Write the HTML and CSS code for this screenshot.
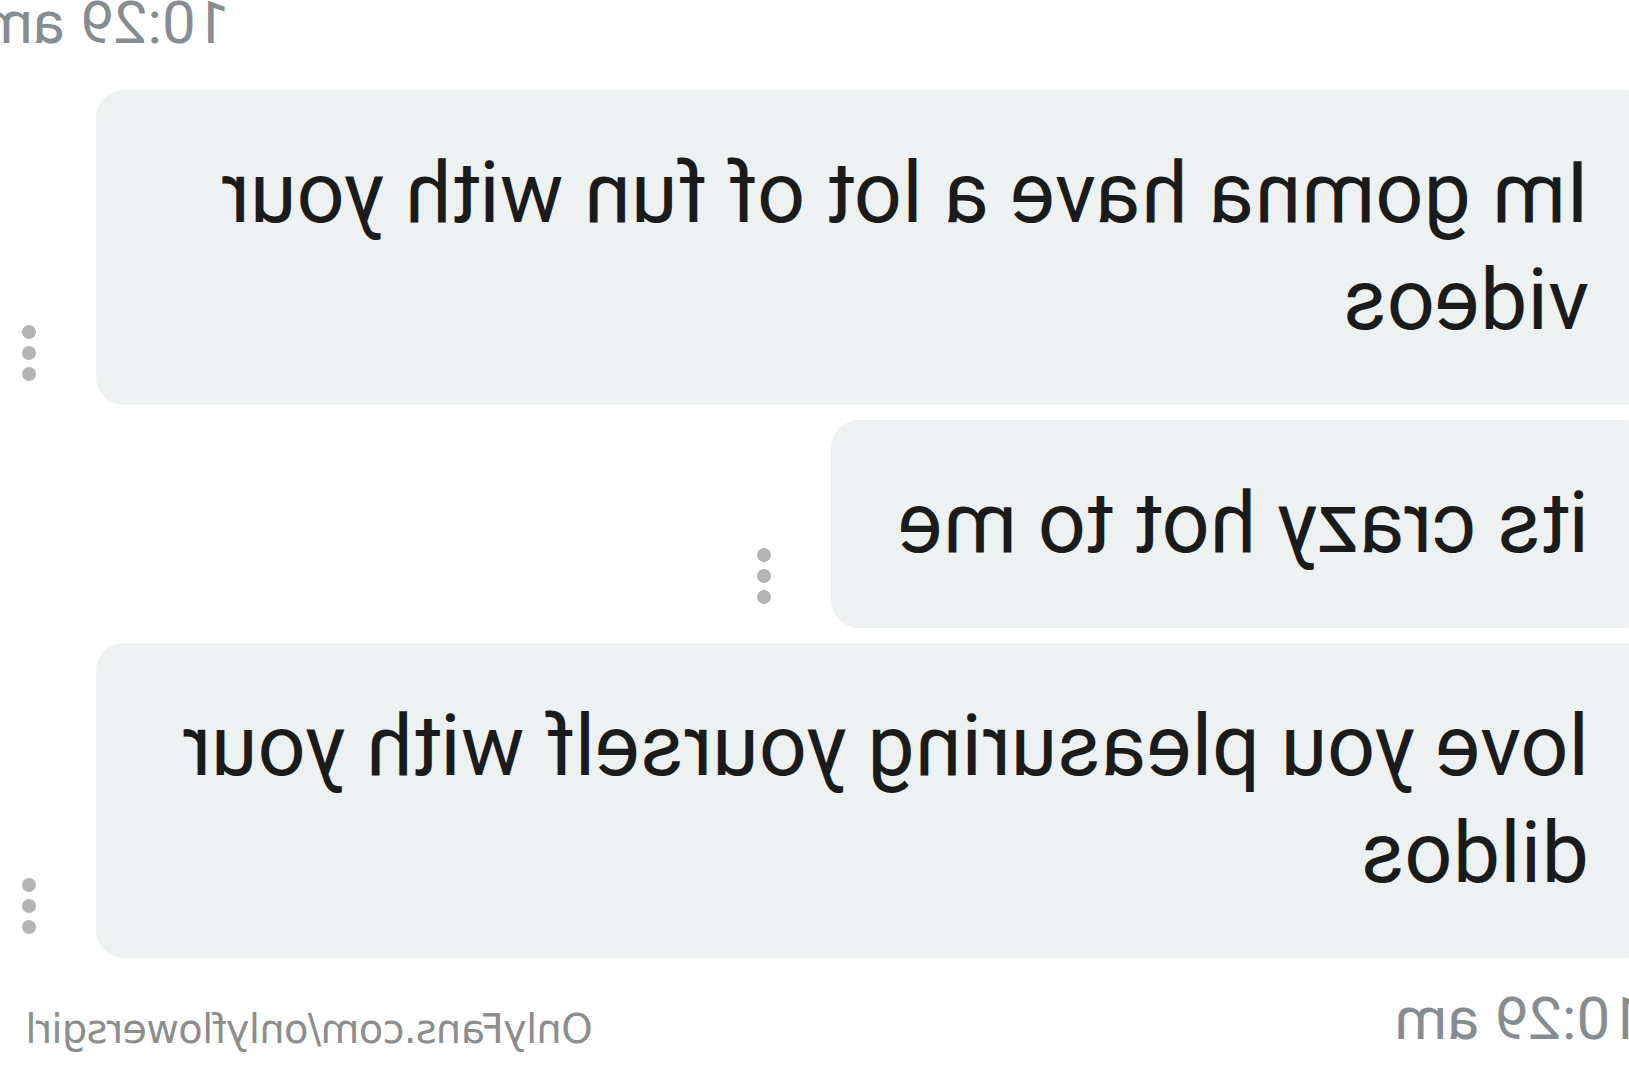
FILE: index.html
```html
<!DOCTYPE html>
<html lang="en">
<head>
  <meta charset="UTF-8">
  <meta name="viewport" content="width=device-width, initial-scale=1.0">
  <title>Messages</title>
  <link rel="stylesheet" href="styles.css">
</head>
<body>
  <!-- the screenshot is a mirror image, so the whole chat is flipped -->
  <div class="chat">
    <div class="time-row top">
      <span class="time">10:29 am</span>
    </div>

    <div class="messages">
      <div class="msg">
        <div class="bubble">Im gomna have a lot of fun with your videos</div>
        <button class="more"><span></span><span></span><span></span></button>
      </div>
      <div class="msg">
        <div class="bubble">its crazy hot to me</div>
        <button class="more"><span></span><span></span><span></span></button>
      </div>
      <div class="msg">
        <div class="bubble">love you pleasuring yourself with your dildos</div>
        <button class="more"><span></span><span></span><span></span></button>
      </div>
    </div>

    <div class="footer">
      <span class="time">10:29 am</span>
      <span class="watermark">OnlyFans.com/onlyflowersgirl</span>
    </div>
  </div>
</body>
</html>
```

FILE: styles.css
```css
body {
  margin: 0;
  background-color: white;
  font-family: Roboto, "Liberation Sans", Arial, sans-serif;
  overflow: hidden;
}

.chat {
  width: 1629px;
  height: 1080px;
  overflow: hidden;
  transform: scaleX(-1);
  display: flex;
  flex-direction: column;
}

.time {
  font-size: 60px;
  line-height: 60px;
  color: #878c91;
  white-space: nowrap;
}

.time-row.top {
  display: flex;
  justify-content: flex-end;
  margin-top: -7px;
  margin-right: -20px;
}

.messages {
  display: flex;
  flex-direction: column;
  gap: 15px;
  margin-top: 37px;
}

.msg {
  display: flex;
  align-items: flex-end;
  gap: 60px;
}

.bubble {
  box-sizing: border-box;
  max-width: 1556px;
  margin-left: -23px;
  padding: 50px 67px 51px 63px;
  background-color: #eef1f2;
  border-radius: 28px;
  color: #1b1b1b;
  font-size: 84.5px;
  line-height: 107px;
}

.more {
  display: flex;
  flex-direction: column;
  gap: 7px;
  padding: 0;
  margin: 0 0 24px 0;
  border: none;
  background: none;
  cursor: pointer;
}

.more span {
  display: block;
  width: 14px;
  height: 14px;
  border-radius: 50%;
  background-color: #b3b4b6;
}

.footer {
  display: flex;
  justify-content: space-between;
  align-items: flex-end;
  margin-top: 31px;
  margin-left: -15px;
  padding-right: 26px;
}

.watermark {
  font-family: "DejaVu Sans", sans-serif;
  font-size: 40px;
  line-height: 40px;
  color: #8d8d8d;
  letter-spacing: -0.7px;
}
```
